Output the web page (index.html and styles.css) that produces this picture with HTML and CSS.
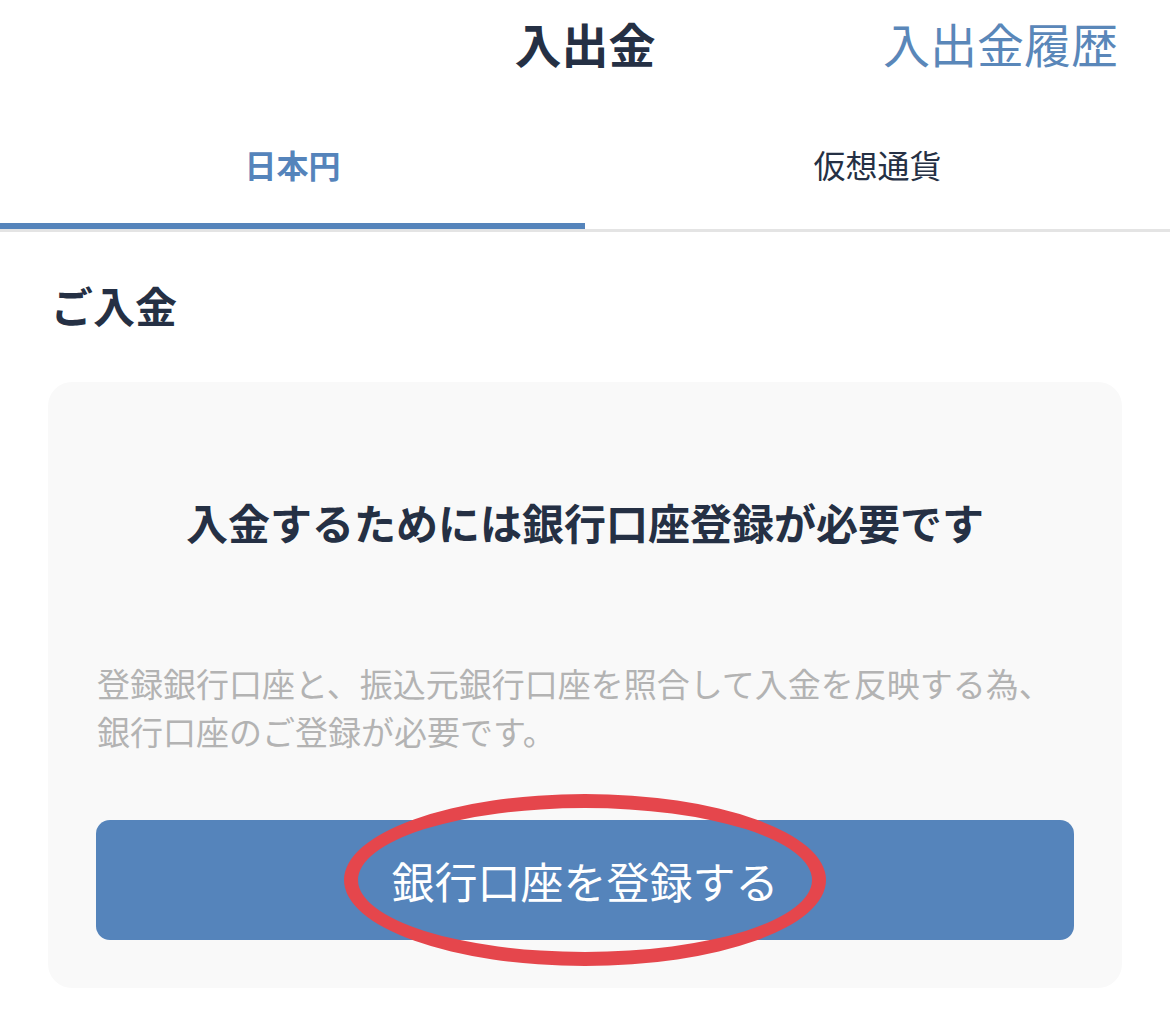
FILE: index.html
```html
<!DOCTYPE html>
<html lang="ja">
<head>
  <meta charset="UTF-8" />
  <title>入出金</title>
  <meta name="viewport" content="width=device-width, initial-scale=1" />
  <link rel="stylesheet" href="styles.css">
</head>
<body>
  <header class="header">
    <div></div>
    <h1 class="header-title">入出金</h1>
    <a class="header-link" href="#">入出金履歴</a>
  </header>

  <nav class="tabs">
    <div class="tab active">日本円</div>
    <div class="tab">仮想通貨</div>
  </nav>

  <main class="content">
    <h2 class="section-title">ご入金</h2>

    <div class="card">
      <p class="card-title">入金するためには銀行口座登録が必要です</p>
      <p class="card-text">登録銀行口座と、振込元銀行口座を照合して入金を反映する為、<br>銀行口座のご登録が必要です。</p>
      <div class="button-wrap">
        <button class="button" type="button">銀行口座を登録する</button>
        <span class="marker"></span>
      </div>
    </div>
  </main>
</body>
</html>
```

FILE: styles.css
```css
:root {
  --primary: #5584bb;
  --text: #253044;
  --muted: #b3b3b3;
  --card: #f9f9f9;
  --border: #e4e4e4;
  --mark: #e5464c;
}

body {
  margin: 0;
  font-family: "Noto Sans CJK JP", "Noto Sans", sans-serif;
  background: #ffffff;
  color: var(--text);
}

.header {
  display: grid;
  grid-template-columns: 1fr auto 1fr;
  align-items: center;
  height: 84px;
  padding: 0 52px;
}

.header-title {
  margin: 0;
  font-size: 47px;
  font-weight: 700;
  line-height: 1;
}

.header-link {
  justify-self: end;
  font-size: 47px;
  line-height: 1;
  color: #5a87b9;
  text-decoration: none;
}

.tabs {
  display: flex;
  border-bottom: 3px solid var(--border);
}

.tab {
  flex: 1;
  text-align: center;
  font-size: 32px;
  line-height: 48px;
  padding: 56px 0 35px;
  border-bottom: 6px solid transparent;
}

.tab.active {
  color: var(--primary);
  font-weight: 700;
  border-bottom-color: var(--primary);
}

.content {
  padding: 0 48px;
}

.section-title {
  margin: 43px 0 47px 3px;
  font-size: 42px;
  line-height: 60px;
  font-weight: 700;
}

.card {
  background: var(--card);
  border-radius: 24px;
  padding: 110px 48px 48px;
}

.card-title {
  margin: 0;
  text-align: center;
  font-size: 42px;
  line-height: 60px;
  font-weight: 700;
}

.card-text {
  margin: 107px 0 65px 1px;
  font-size: 33px;
  line-height: 48px;
  color: var(--muted);
}

.button-wrap {
  position: relative;
}

.button {
  display: block;
  width: 100%;
  height: 120px;
  border: none;
  border-radius: 14px;
  background: var(--primary);
  color: #ffffff;
  font-family: inherit;
  font-size: 43px;
  cursor: pointer;
}

.marker {
  position: absolute;
  left: 50%;
  top: 50%;
  width: 454px;
  height: 144px;
  border: 14px solid var(--mark);
  border-radius: 50%;
  transform: translate(-50%, -50%);
  pointer-events: none;
}
```
